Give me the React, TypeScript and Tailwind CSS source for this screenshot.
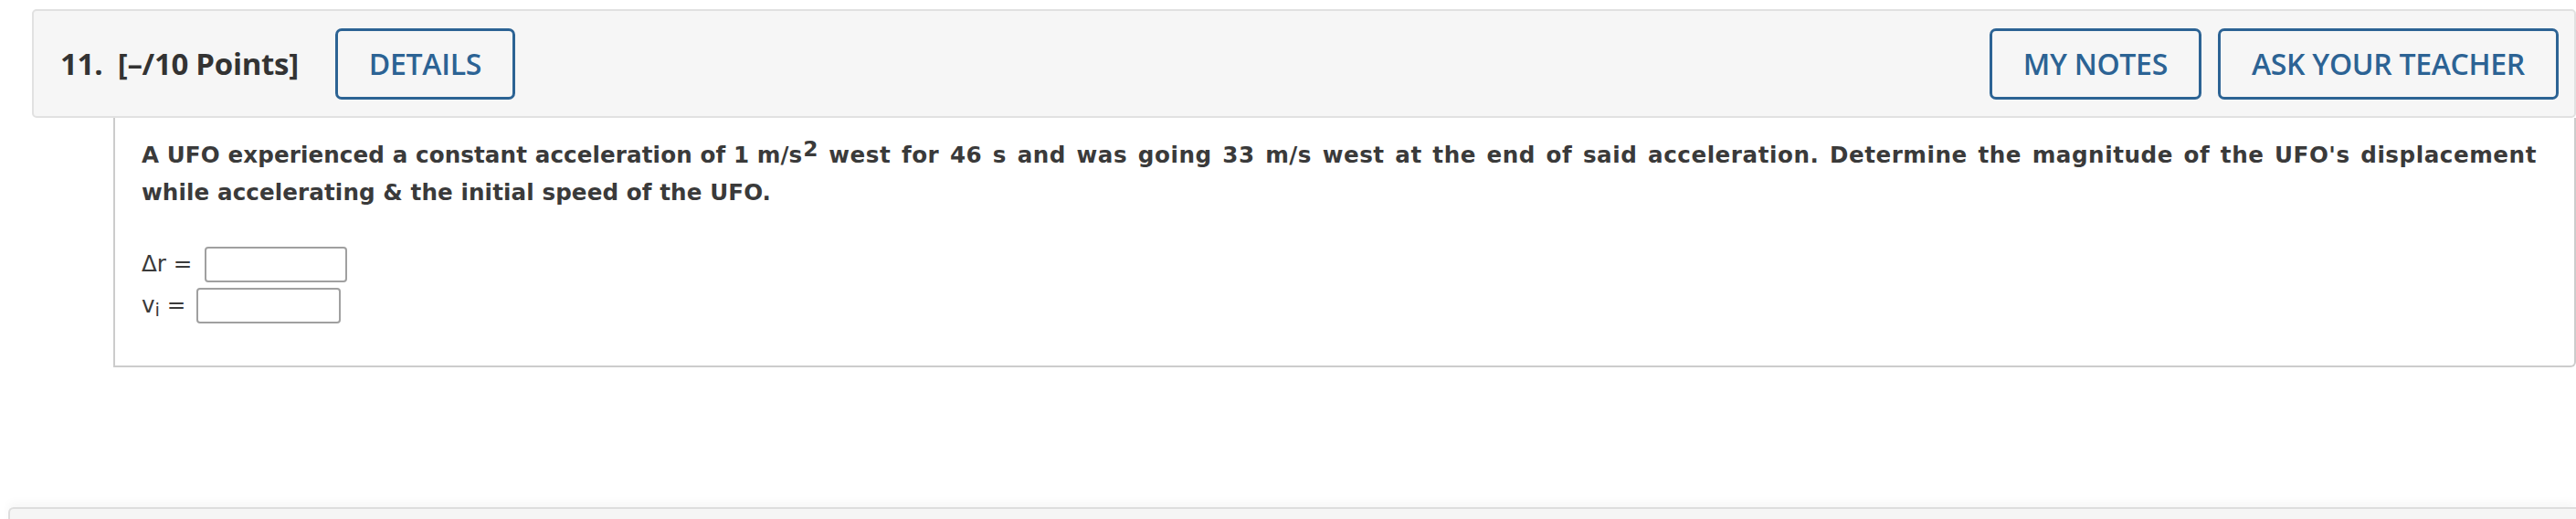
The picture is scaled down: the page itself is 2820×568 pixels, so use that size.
import React from "react";

const blueBtn =
  "h-[78px] px-[34px] border-[3px] border-[#2c6394] rounded-[7px] text-[#2c6394] text-[32px] font-semibold leading-none flex items-center bg-[#f6f6f6] tracking-[-0.3px]";

export default function App() {
  return (
    <div className="w-[2820px] h-[568px] bg-white overflow-hidden relative">
      {/* Header */}
      <div
        className="ml-[35px] mt-[10px] h-[119px] border-2 border-[#e1e1e1] bg-[#f6f6f6] rounded-[5px] flex items-center pl-[29px] pr-[17px]"
        style={{ fontFamily: '"Open Sans", "Noto Sans", sans-serif' }}
      >
        <span className="text-[33px] font-bold text-[#333333] tracking-[-0.3px] whitespace-pre">
          11.  [–/10 Points]
        </span>
        <div className="ml-[40px] flex">
          <div className={blueBtn}>DETAILS</div>
        </div>
        <div className="ml-auto flex gap-[18px]">
          <div className={blueBtn}>MY NOTES</div>
          <div className={blueBtn}>ASK YOUR TEACHER</div>
        </div>
      </div>

      {/* Body */}
      <div
        className="ml-[124px] h-[273px] border-x-2 border-b-2 border-[#cccccc] rounded-br-[6px] pl-[29px] pt-[20px] text-[#3a3a3a]"
        style={{ fontFamily: '"DejaVu Sans", Verdana, sans-serif' }}
      >
        <p className="text-[24.6px] font-bold leading-[41px] whitespace-nowrap tracking-[0.1px]">
          A UFO experienced a constant acceleration of 1 m/s
          <sup className="text-[0.95em] relative top-[-0.3em] leading-none ml-[1px]">2</sup>
          <span className="tracking-[0.55px] [word-spacing:2.5px]">
            {" "}west for 46 s and was going 33 m/s west at the end of said acceleration. Determine
            the magnitude of the UFO's displacement
          </span>
          <br />
          while accelerating &amp; the initial speed of the UFO.
        </p>
        <div className="mt-[39px] flex flex-col gap-[6px] text-[24.6px] text-[#3a3a3a]">
          <div className="flex items-center h-[39px]">
            <span className="whitespace-pre">Δr = </span>
            <div className="ml-[6px] w-[156px] h-[39px] border-2 border-[#a0a0a0] rounded-[4px] bg-white" />
          </div>
          <div className="flex items-center h-[39px]">
            <span className="whitespace-pre">
              v<sub className="text-[0.8em] relative top-[0.2em]">i</sub> ={" "}
            </span>
            <div className="ml-[4px] w-[158px] h-[39px] border-2 border-[#a0a0a0] rounded-[4px] bg-white" />
          </div>
        </div>
      </div>

      {/* Bottom panel */}
      <div className="mt-[153px] ml-[9px] h-[40px] bg-[#f5f5f5] border-t-2 border-l-2 border-[#dddddd] rounded-tl-[6px] shadow-[0_-6px_10px_rgba(0,0,0,0.03)]" />
    </div>
  );
}
